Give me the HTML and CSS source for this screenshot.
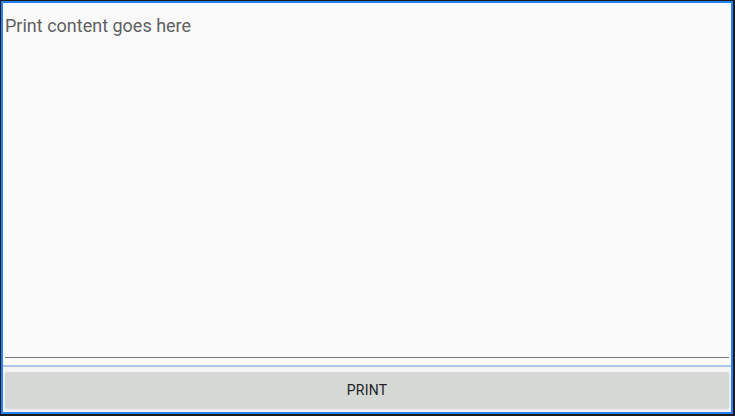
FILE: index.html
```html
<!DOCTYPE html>
<html>
<head>
<meta charset="utf-8">
<link rel="stylesheet" href="styles.css">
</head>
<body>
<div class="frame">
  <div class="window">
    <div class="editor">
      <div class="content">Print content goes here</div>
      <div class="underline"></div>
    </div>
    <div class="divider"></div>
    <div class="actions">
      <button class="print-btn">PRINT</button>
    </div>
  </div>
</div>
</body>
</html>
```

FILE: styles.css
```css
html, body {
  margin: 0;
  padding: 0;
  width: 735px;
  height: 416px;
  background: #1c1c1c;
  overflow: hidden;
}
.frame {
  box-sizing: border-box;
  width: 735px;
  height: 416px;
  padding: 1px 2px 2px 1px;
  display: flex;
}
.window {
  flex: 1;
  display: flex;
  flex-direction: column;
  border: 2px solid #2582f5;
  background: #fafafa;
  font-family: Roboto, "Liberation Sans", sans-serif;
}
.editor {
  flex: 1;
  display: flex;
  flex-direction: column;
  padding: 0 2px 0 2px;
}
.content {
  flex: 1;
  font-size: 18px;
  color: #606060;
  padding-top: 12px;
  line-height: 22px;
}
.underline {
  height: 1px;
  background: #777;
  margin-bottom: 7px;
}
.divider {
  height: 2px;
  background: #b4c3e6;
}
.actions {
  padding: 5px 2px 4px 2px;
  background: #f4f4f4;
}
.print-btn {
  display: block;
  width: 100%;
  height: 36px;
  border: none;
  border-radius: 2px;
  background: #d6d8d6;
  box-shadow: 0 1px 2px rgba(0,0,0,0.15);
  font-family: Roboto, "Liberation Sans", sans-serif;
  font-size: 14px;
  color: #222;
  letter-spacing: 0.2px;
  padding: 0;
}
```
